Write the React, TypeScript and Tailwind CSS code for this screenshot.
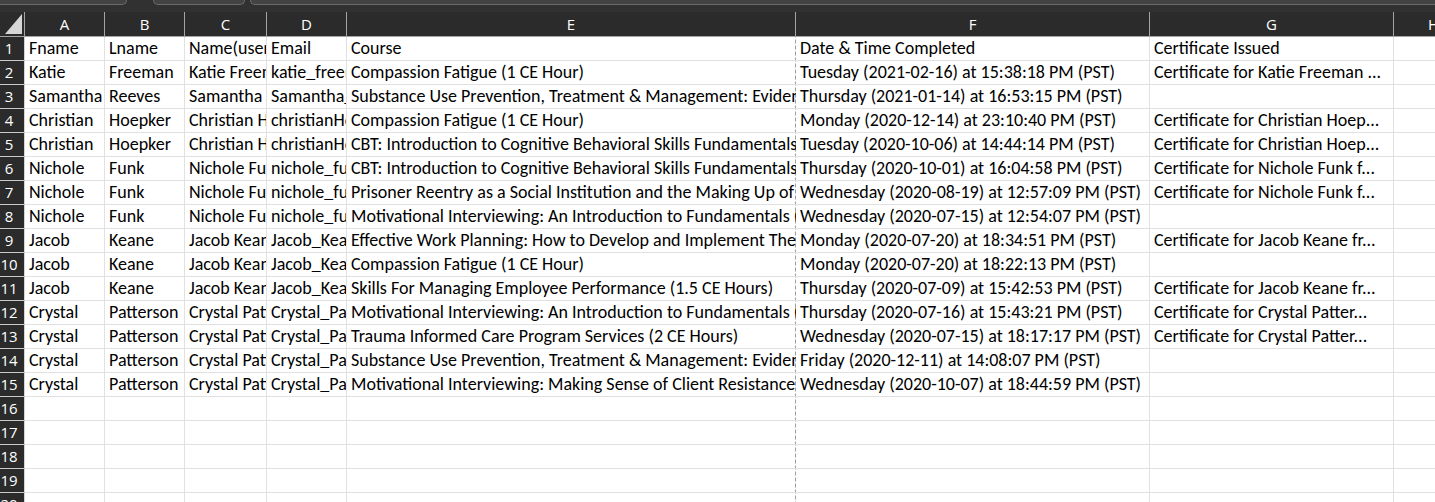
import React from "react";

const COLUMNS = ["A", "B", "C", "D", "E", "F", "G", "H"];

// rows of the sheet, one array per row (A..G)
const ROWS: string[][] = [
  ["Fname", "Lname", "Name(username)", "Email", "Course", "Date & Time Completed", "Certificate Issued"],
  ["Katie", "Freeman", "Katie Freeman", "katie_freeman@mail.com", "Compassion Fatigue (1 CE Hour)", "Tuesday (2021-02-16) at 15:38:18 PM (PST)", "Certificate for Katie Freeman ..."],
  ["Samantha", "Reeves", "Samantha Reeves", "Samantha_Reeves@mail.com", "Substance Use Prevention, Treatment & Management: Evidence-Based Practices", "Thursday (2021-01-14) at 16:53:15 PM (PST)", ""],
  ["Christian", "Hoepker", "Christian Hoepker", "christianHoepker@mail.com", "Compassion Fatigue (1 CE Hour)", "Monday (2020-12-14) at 23:10:40 PM (PST)", "Certificate for Christian Hoep..."],
  ["Christian", "Hoepker", "Christian Hoepker", "christianHoepker@mail.com", "CBT: Introduction to Cognitive Behavioral Skills Fundamentals (3 CE Hours)", "Tuesday (2020-10-06) at 14:44:14 PM (PST)", "Certificate for Christian Hoep..."],
  ["Nichole", "Funk", "Nichole Funk", "nichole_funk@mail.com", "CBT: Introduction to Cognitive Behavioral Skills Fundamentals (3 CE Hours)", "Thursday (2020-10-01) at 16:04:58 PM (PST)", "Certificate for Nichole Funk f..."],
  ["Nichole", "Funk", "Nichole Funk", "nichole_funk@mail.com", "Prisoner Reentry as a Social Institution and the Making Up of a Criminal", "Wednesday (2020-08-19) at 12:57:09 PM (PST)", "Certificate for Nichole Funk f..."],
  ["Nichole", "Funk", "Nichole Funk", "nichole_funk@mail.com", "Motivational Interviewing: An Introduction to Fundamentals (2 CE Hours)", "Wednesday (2020-07-15) at 12:54:07 PM (PST)", ""],
  ["Jacob", "Keane", "Jacob Keane", "Jacob_Keane@mail.com", "Effective Work Planning: How to Develop and Implement Them", "Monday (2020-07-20) at 18:34:51 PM (PST)", "Certificate for Jacob Keane fr..."],
  ["Jacob", "Keane", "Jacob Keane", "Jacob_Keane@mail.com", "Compassion Fatigue (1 CE Hour)", "Monday (2020-07-20) at 18:22:13 PM (PST)", ""],
  ["Jacob", "Keane", "Jacob Keane", "Jacob_Keane@mail.com", "Skills For Managing Employee Performance (1.5 CE Hours)", "Thursday (2020-07-09) at 15:42:53 PM (PST)", "Certificate for Jacob Keane fr..."],
  ["Crystal", "Patterson", "Crystal Patterson", "Crystal_Patterson@mail.com", "Motivational Interviewing: An Introduction to Fundamentals (2 CE Hours)", "Thursday (2020-07-16) at 15:43:21 PM (PST)", "Certificate for Crystal Patter..."],
  ["Crystal", "Patterson", "Crystal Patterson", "Crystal_Patterson@mail.com", "Trauma Informed Care Program Services (2 CE Hours)", "Wednesday (2020-07-15) at 18:17:17 PM (PST)", "Certificate for Crystal Patter..."],
  ["Crystal", "Patterson", "Crystal Patterson", "Crystal_Patterson@mail.com", "Substance Use Prevention, Treatment & Management: Evidence-Based Practices", "Friday (2020-12-11) at 14:08:07 PM (PST)", ""],
  ["Crystal", "Patterson", "Crystal Patterson", "Crystal_Patterson@mail.com", "Motivational Interviewing: Making Sense of Client Resistance (2 CE Hours)", "Wednesday (2020-10-07) at 18:44:59 PM (PST)", ""],
];

const TOTAL_ROWS = 20;

// H runs past the window edge, so its letter is cut like in the sheet
const gridCols = "grid grid-cols-[25px_80px_80px_82px_80px_449px_354px_244px_80px]";
const uiFont = "font-['Segoe_UI','Open_Sans',sans-serif]";
const cellFont = "font-['Carlito','Lato','Liberation_Sans',sans-serif]";

// page break line between E and F
const dashed =
  "border-r-0 bg-[linear-gradient(to_bottom,#9f9f9f_0_4px,transparent_4px_6px)] bg-[length:1px_6px] bg-repeat-y bg-right";

function TopBar() {
  return (
    <div className="flex h-[12px] bg-[#313131]">
      <div className="h-[5px] w-[127px] shrink-0 rounded-br-[5px] border-b border-r border-[#6b6b6b] bg-[#434343]" />
      <div className="ml-[26px] h-[5px] w-[92px] shrink-0 rounded-b-[5px] border-x border-b border-[#6b6b6b] bg-[#434343]" />
      <div className="ml-[5px] h-[5px] flex-1 rounded-bl-[5px] border-b border-l border-[#6b6b6b] bg-[#434343]" />
    </div>
  );
}

function HeaderRow() {
  return (
    <div className={`${gridCols} h-[25px] bg-[#2b2b2b]`}>
      <div className="relative border-b border-r border-[#a3a3a3]">
        <svg className="absolute left-[5px] top-[2px]" width="18" height="20" viewBox="0 0 18 20">
          <polygon points="17,0 17,20 0,20" fill="#d6d6d6" />
        </svg>
      </div>
      {COLUMNS.map((c) => (
        <div
          key={c}
          className={`${uiFont} border-b border-r border-[#a3a3a3] text-center text-[15px] leading-[24px] text-white`}
        >
          {c}
        </div>
      ))}
    </div>
  );
}

export default function App() {
  return (
    <div className="h-[502px] w-full overflow-hidden bg-white">
      <TopBar />
      <HeaderRow />
      {Array.from({ length: TOTAL_ROWS }).map((_, i) => {
        const data = ROWS[i] ?? [];
        return (
          <div key={i} className={`${gridCols} h-[24px]`}>
            <div
              className={`${uiFont} border-b border-r border-b-[#c9c9c9] border-r-[#d4d4d4] bg-[#2b2b2b] pr-[6px] text-center text-[15px] leading-[23px] text-white`}
            >
              {i + 1}
            </div>
            {COLUMNS.map((c, j) => (
              <div
                key={c}
                className={`${cellFont} overflow-hidden whitespace-nowrap border-b border-r border-[#e1e1e1] px-[4px] text-[18px] leading-[23px] text-black ${
                  j === 4 ? dashed : ""
                }`}
              >
                {data[j] ?? ""}
              </div>
            ))}
          </div>
        );
      })}
    </div>
  );
}
